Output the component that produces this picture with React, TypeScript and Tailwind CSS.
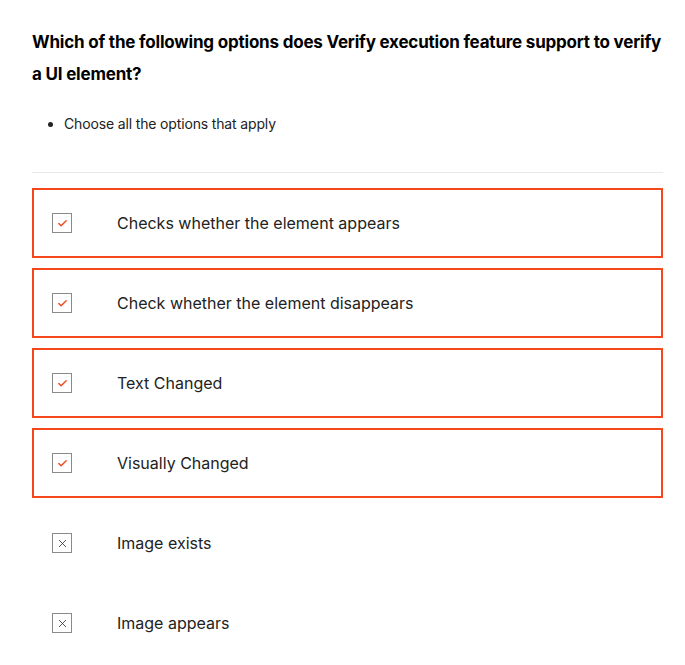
import { Check, X } from 'lucide-react';

const options = [
  { label: 'Checks whether the element appears', selected: true },
  { label: 'Check whether the element disappears', selected: true },
  { label: 'Text Changed', selected: true },
  { label: 'Visually Changed', selected: true },
  { label: 'Image exists', selected: false },
  { label: 'Image appears', selected: false },
];

function App() {
  return (
    <div className="min-h-screen bg-white pl-8 pr-[22px] pt-[26px] font-['Inter',sans-serif] text-[#1a1a1a]">
      <h2 className="max-w-[631px] text-[17px] font-bold leading-[32px] tracking-[-0.2px] text-black">
        Which of the following options does Verify execution feature support to verify a UI element?
      </h2>
      <ul className="mt-6 list-disc pl-8 text-[14px] leading-5 tracking-[-0.15px] text-[#222]">
        <li>Choose all the options that apply</li>
      </ul>
      <div className="mt-[38px] border-t border-[#e8e8e8]" />
      <div className="mt-[15px] flex flex-col gap-[10px]">
        {options.map((opt) => (
          <div
            key={opt.label}
            className={
              'flex h-[70px] items-center border-2 pl-[18px] ' +
              (opt.selected ? 'border-[#f4471c]' : 'border-transparent')
            }
          >
            <span className="flex h-5 w-5 items-center justify-center border border-[#8a8a8a]">
              {opt.selected ? (
                <Check size={11} strokeWidth={3} className="text-[#f4471c]" />
              ) : (
                <X size={13} strokeWidth={1.5} className="text-[#333]" />
              )}
            </span>
            <span className="ml-[45px] text-[16px] text-[#222]">{opt.label}</span>
          </div>
        ))}
      </div>
    </div>
  );
}

export default App;
